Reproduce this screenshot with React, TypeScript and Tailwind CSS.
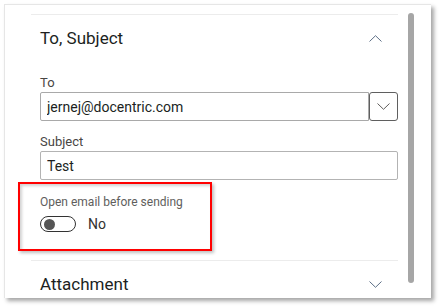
import React, { useState } from "react";

const ChevronUp: React.FC = () => (
  <svg width="13" height="7" viewBox="0 0 13 7" fill="none">
    <path d="M0.5 6.5 L6.5 0.7 L12.5 6.5" stroke="#5d6f86" strokeWidth="1" />
  </svg>
);

const ChevronDown: React.FC<{ color?: string }> = ({ color = "#5d6f86" }) => (
  <svg width="13" height="7" viewBox="0 0 13 7" fill="none">
    <path d="M0.5 0.5 L6.5 6.3 L12.5 0.5" stroke={color} strokeWidth="1" />
  </svg>
);

const App: React.FC = () => {
  const [to, setTo] = useState("jernej@docentric.com");
  const [subject, setSubject] = useState("Test");
  const [openEmail, setOpenEmail] = useState(false);

  return (
    <div className="w-[440px] h-[307px] bg-white pt-[4px] pl-[4px] font-['Roboto',sans-serif] overflow-hidden">
      <div className="relative w-[427px] h-[294px] bg-white border-l border-t border-[#e6e6e6] shadow-[3px_3px_4px_rgba(0,0,0,0.35)] flex items-start overflow-hidden">
        <div className="pl-[26px] w-[393px] flex flex-col shrink-0">
          <div className="mt-[9px] h-px w-[367px] bg-[#ececec]" />

          <div className="h-[46px] pl-[9px] pr-[16px] flex items-center justify-between">
            <span className="text-[17px] leading-[24px] text-[#201f1e]">To, Subject</span>
            <ChevronUp />
          </div>

          <div className="pl-[9px] mt-[13px] text-[13px] leading-[18px] text-[#484644]">To</div>
          <div className="pl-[9px] flex">
            <input
              value={to}
              onChange={(e) => setTo(e.target.value)}
              className="w-[329px] h-[29px] border border-[#a9a9a9] rounded-l-[2px] px-[6px] text-[14px] text-[#201f1e] outline-none"
            />
            <button className="w-[29px] h-[29px] border border-[#5f5f5f] rounded-[3px] flex items-center justify-center">
              <ChevronDown color="#605e5c" />
            </button>
          </div>

          <div className="pl-[9px] mt-[12px] text-[13px] leading-[18px] text-[#484644]">Subject</div>
          <div className="pl-[9px]">
            <input
              value={subject}
              onChange={(e) => setSubject(e.target.value)}
              className="w-[358px] h-[29px] border border-[#b3b3b3] rounded-[2px] px-[6px] text-[14px] text-[#201f1e] outline-none"
            />
          </div>

          <div className="pl-[9px] mt-[14px] text-[12px] leading-[16px] text-[#605e5c]">
            Open email before sending
          </div>
          <div className="pl-[9px] mt-[5px] flex items-center gap-[12px]">
            <button
              onClick={() => setOpenEmail(!openEmail)}
              className={`w-[36px] h-[16px] rounded-full border border-[#333] flex items-center px-[3px] ${
                openEmail ? "justify-end" : "justify-start"
              }`}
            >
              <span className="w-[11px] h-[11px] rounded-full bg-[#555]" />
            </button>
            <span className="text-[14px] leading-[18px] text-[#323130]">{openEmail ? "Yes" : "No"}</span>
          </div>

          <div className="mt-[27px] h-px w-[367px] bg-[#ececec]" />
          <div className="h-[46px] pl-[9px] pr-[16px] flex items-center justify-between">
            <span className="text-[17px] leading-[24px] text-[#201f1e]">Attachment</span>
            <ChevronDown />
          </div>
        </div>

        <div className="ml-[10px] mt-[8px] w-[6px] h-[270px] rounded-full bg-[#a6a6a6]" />

        <div className="absolute left-[13px] top-[177px] w-[194px] h-[69px] border-2 border-[#ff0000] shadow-[2px_2px_3px_rgba(0,0,0,0.25),inset_2px_2px_3px_rgba(0,0,0,0.18)] pointer-events-none" />
      </div>
    </div>
  );
};

export default App;
